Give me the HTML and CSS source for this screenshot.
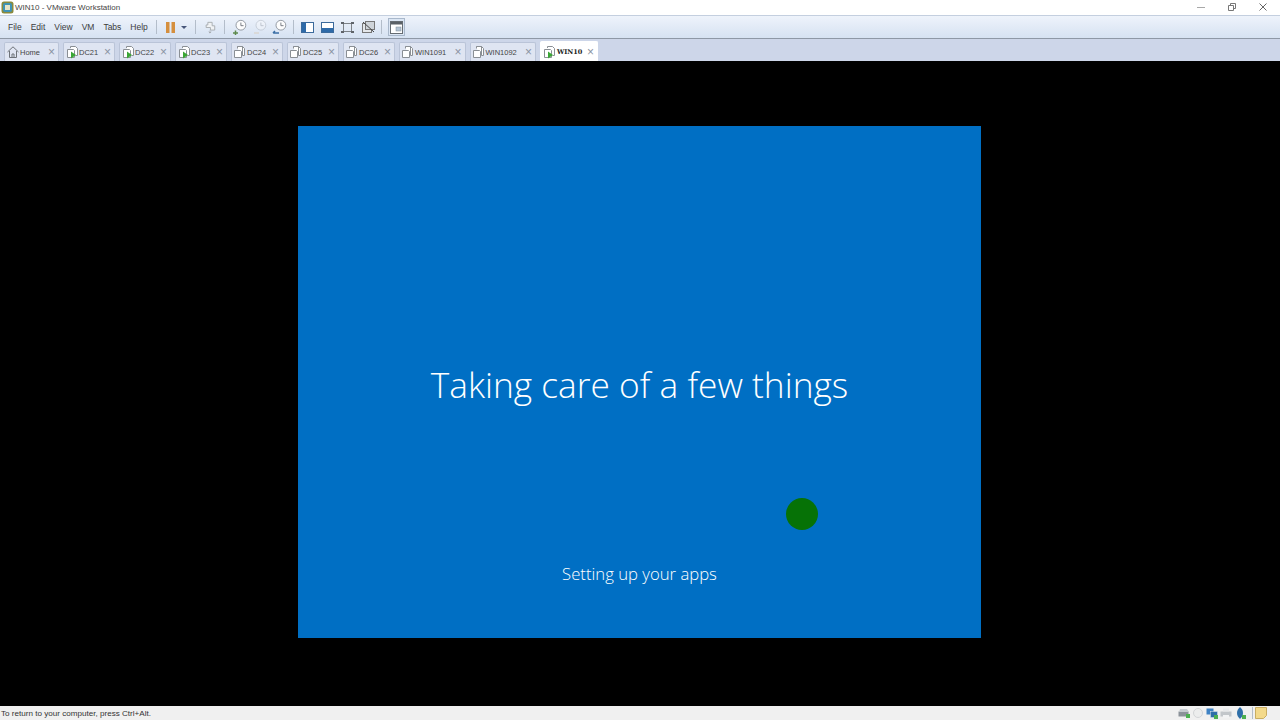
FILE: index.html
```html
<!DOCTYPE html>
<html lang="en">
<head>
  <meta charset="UTF-8" />
  <title>WIN10 - VMware Workstation</title>
  <link rel="stylesheet" href="styles.css">
</head>
<body>
  <svg class="defs" width="0" height="0">
    <symbol id="vm" viewBox="0 0 14 14">
      <path d="M4.500 3.500V1.500h5l2 2v7h-2M1.500 5.500h6l1 1v6h-7z" fill="#fff" stroke="#8a8f94"/>
      <path d="M4.500 1.500h5v9" fill="none" stroke="#8a8f94"/>
    </symbol>
    <symbol id="vm-on" viewBox="0 0 14 14">
      <path d="M5.500 3V1.500h5l2 2v7h-2M2.500 4.500h6l1 1v7h-7z" fill="#fff" stroke="#8a8f94"/>
      <path d="M6 6.500l5 3.500-5 3.500z" fill="#3aa635"/>
    </symbol>
    <symbol id="clock" viewBox="0 0 18 18">
      <circle cx="10" cy="7" r="5.500" fill="#fdfdfd" stroke="#8a9099"/>
      <path d="M10 4v3.500h3" fill="none" stroke="#6a7078"/>
    </symbol>
  </svg>

  <header class="titlebar">
    <div class="title">
      <svg class="app-icon" width="13" height="13" viewBox="0 0 13 13">
        <rect x="0.500" y="0.500" width="12" height="12" rx="2.500" fill="#8a8a3c"/>
        <rect x="2" y="2" width="9" height="9" rx="2" fill="#3f93b5"/>
        <rect x="4" y="4" width="5" height="5" fill="#e6e4c8"/>
      </svg>
      <span>WIN10 - VMware Workstation</span>
    </div>
    <div class="win-buttons">
      <svg width="8" height="8" viewBox="0 0 8 8"><path d="M0 4.500h8" stroke="#a8a8a8"/></svg>
      <svg width="8" height="8" viewBox="0 0 8 8"><path d="M0.500 2.500h5v5h-5zM2.500 2.500v-2h5v5h-2" fill="none" stroke="#777"/></svg>
      <svg width="8" height="8" viewBox="0 0 8 8"><path d="M0.500 0.500l7 7M7.500 0.500l-7 7" stroke="#666"/></svg>
    </div>
  </header>

  <nav class="toolbar">
    <ul class="menu">
      <li>File</li>
      <li>Edit</li>
      <li>View</li>
      <li>VM</li>
      <li>Tabs</li>
      <li>Help</li>
    </ul>
    <span class="sep sep-menu"></span>
    <svg class="pause" width="9" height="11" viewBox="0 0 9 11"><path d="M0 0h3.500v11H0zM5.500 0H9v11H5.500z" fill="#d58f3e"/></svg>
    <svg class="caret" width="6" height="3" viewBox="0 0 6 3"><path d="M0 0h6L3 3z" fill="#48567a"/></svg>
    <span class="sep sep-pause"></span>
    <svg class="tool-send" width="12" height="15" viewBox="0 0 14 15">
      <path d="M4.500 1.500h5v4h3v5h-5v-3h-5v-3h2z" fill="#f0f2f4" stroke="#a3a7ab"/>
      <path d="M7 11v3M5.500 12.500L7 14l1.500-1.500" fill="none" stroke="#a3a7ab"/>
    </svg>
    <span class="sep sep-send"></span>
    <svg class="tool-clock" width="16" height="16"><use href="#clock"/><path d="M1 14h5M3.500 11.500v5" stroke="#5d8a4c" stroke-width="1.500"/></svg>
    <svg class="tool-clock faded" width="16" height="16"><use href="#clock"/><path d="M2 14h5" stroke="#d9b88f" stroke-width="1.500"/></svg>
    <svg class="tool-clock" width="16" height="16"><use href="#clock"/><path d="M1 14h6M1 14l2-2" fill="none" stroke="#3a6ea5" stroke-width="1.500"/></svg>
    <span class="sep sep-clock"></span>
    <svg class="view-a" width="13" height="11" viewBox="0 0 13 11"><rect x="0.500" y="0.500" width="12" height="10" fill="#fff" stroke="#3b6a9c"/><rect x="1" y="1" width="4" height="9" fill="#2e6aa8"/></svg>
    <svg class="view-b" width="13" height="11" viewBox="0 0 13 11"><rect x="0.500" y="0.500" width="12" height="10" fill="#fff" stroke="#3b6a9c"/><rect x="1" y="6" width="11" height="4" fill="#2e6aa8"/></svg>
    <svg class="view-c" width="13" height="11" viewBox="0 0 13 11"><path d="M2.500 1.500h8v8h-8z" fill="none" stroke="#7d8287"/><path d="M0 0h3v2H0zM10 0h3v2h-3zM0 9h3v2H0zM10 9h3v2h-3z" fill="#5f646a"/></svg>
    <svg class="view-d" width="13" height="12" viewBox="0 0 13 12"><rect x="0.500" y="2.500" width="9" height="9" fill="#e4e7ea" stroke="#777"/><rect x="3.500" y="0.500" width="9" height="8" fill="#cfd4d9" stroke="#777"/><path d="M1 1l11 10" stroke="#444"/></svg>
    <span class="sep sep-view"></span>
    <div class="tool-active">
      <svg width="13" height="13" viewBox="0 0 13 13"><rect x="0.500" y="0.500" width="12" height="12" fill="#fff" stroke="#666c72"/><rect x="1" y="1" width="11" height="2.500" fill="#5a6066"/><rect x="6" y="6" width="5" height="4" fill="#b4c4d4" stroke="#7d8a96" stroke-width="0.500"/></svg>
    </div>
  </nav>

  <div class="tabstrip">
    <div class="tab tab-home">
      <svg width="12" height="12" viewBox="0 0 12 12"><path d="M0.500 6L6 0.800 11.500 6M2.500 5v6.500h7V5M5 11.500V8h2v3.500" fill="none" stroke="#6d7278"/></svg>
      <span class="tab-name">Home</span><span class="tab-x">×</span>
    </div>
    <div class="tab"><svg width="14" height="14"><use href="#vm-on"/></svg><span class="tab-name">DC21</span><span class="tab-x">×</span></div>
    <div class="tab"><svg width="14" height="14"><use href="#vm-on"/></svg><span class="tab-name">DC22</span><span class="tab-x">×</span></div>
    <div class="tab"><svg width="14" height="14"><use href="#vm-on"/></svg><span class="tab-name">DC23</span><span class="tab-x">×</span></div>
    <div class="tab"><svg width="14" height="14"><use href="#vm"/></svg><span class="tab-name">DC24</span><span class="tab-x">×</span></div>
    <div class="tab"><svg width="14" height="14"><use href="#vm"/></svg><span class="tab-name">DC25</span><span class="tab-x">×</span></div>
    <div class="tab"><svg width="14" height="14"><use href="#vm"/></svg><span class="tab-name">DC26</span><span class="tab-x">×</span></div>
    <div class="tab tab-wide"><svg width="14" height="14"><use href="#vm"/></svg><span class="tab-name">WIN1091</span><span class="tab-x">×</span></div>
    <div class="tab tab-wide"><svg width="14" height="14"><use href="#vm"/></svg><span class="tab-name">WIN1092</span><span class="tab-x">×</span></div>
    <div class="tab tab-active"><svg width="14" height="14"><use href="#vm-on"/></svg><span class="tab-name">WIN10</span><span class="tab-x">×</span></div>
  </div>

  <main class="stage">
    <section class="guest">
      <h1>Taking care of a few things</h1>
      <p>Setting up your apps</p>
      <div class="cursor-dot"></div>
    </section>
  </main>

  <footer class="statusbar">
    <span class="status-text">To return to your computer, press Ctrl+Alt.</span>
    <div class="status-icons">
      <svg width="12" height="10" viewBox="0 0 12 10"><rect x="0.500" y="3.500" width="10" height="5" fill="#8b9299"/><path d="M2 1h7l2 3H1z" fill="#c5cacf"/><rect x="8" y="6" width="4" height="4" fill="#4caf50"/></svg>
      <svg width="12" height="10" viewBox="0 0 12 10"><circle cx="6" cy="5" r="4.500" fill="#eceded" stroke="#d3d5d7"/></svg>
      <svg width="12" height="11" viewBox="0 0 12 11"><rect x="0.500" y="0.500" width="7" height="6" fill="#3f82c4"/><rect x="4.500" y="3.500" width="7" height="6" fill="#2f6fa8" stroke="#dfe6ec" stroke-width="0.500"/><rect x="8" y="7" width="4" height="4" fill="#4caf50"/></svg>
      <svg width="12" height="10" viewBox="0 0 12 10"><rect x="0.500" y="3.500" width="11" height="5" fill="#c2c6ca"/><rect x="3" y="0.500" width="6" height="3" fill="#e6e8ea"/><rect x="3" y="7" width="6" height="3" fill="#f2f3f4"/></svg>
      <svg width="12" height="12" viewBox="0 0 12 12"><path d="M6 0c2 2 3 3.500 3 6s-1 4-3 6c-2-2-3-3.500-3-6s1-4 3-6z" fill="#2f6fa8"/><rect x="8" y="8" width="4" height="4" fill="#4caf50"/></svg>
      <span class="sep sep-status"></span>
      <svg width="12" height="12" viewBox="0 0 12 12"><path d="M0.500 0.500h11v8l-3 3h-8z" fill="#f3d98a" stroke="#c9ad62"/></svg>
    </div>
  </footer>
</body>
</html>
```
FILE: styles.css
```css
* {
  box-sizing: border-box;
}

html, body {
  margin: 0;
  height: 720px;
  overflow: hidden;
}

body {
  display: flex;
  flex-direction: column;
  font-family: "Liberation Sans", Arial, sans-serif;
  font-size: 8.500px;
  color: #333;
  background: #fff;
}

.defs {
  display: none;
}

svg {
  flex: none;
  display: block;
}

/* title bar */
.titlebar {
  height: 15px;
  display: flex;
  justify-content: space-between;
  align-items: center;
  background: #fff;
}

.title {
  display: flex;
  align-items: center;
  gap: 1px;
  padding-left: 1px;
  font-size: 8px;
  color: #444;
}

.win-buttons {
  display: flex;
  gap: 23px;
  padding-right: 13px;
  margin-top: -1px;
}

/* toolbar */
.toolbar {
  height: 24px;
  display: flex;
  align-items: center;
  border-top: 1px solid #c4cfdf;
  border-bottom: 1px solid #8e98a6;
  background: linear-gradient(#eef3fb, #d6e2f2);
}

.menu {
  display: flex;
  list-style: none;
  margin: 0;
  padding: 0 0 0 8px;
  gap: 9px;
  width: 156px;
  color: #3c3c3c;
}

.sep {
  width: 1px;
  height: 14px;
  background: #b3bdca;
}

.pause { margin-left: 9px; }
.caret { margin-left: 6px; }
.sep-pause { margin-left: 8px; }
.tool-send { margin-left: 8px; }
.sep-send { margin-left: 8px; }
.tool-clock { margin-left: 4px; }
.toolbar .sep-send + .tool-clock { margin-left: 7px; }
.faded { opacity: 0.35; }
.sep-clock { margin-left: 5px; }
.view-a { margin-left: 7px; }
.view-b { margin-left: 7px; }
.view-c { margin-left: 7px; }
.view-d { margin-left: 8px; }
.sep-view { margin-left: 6px; }

.tool-active {
  margin-left: 6px;
  width: 17px;
  height: 18px;
  display: flex;
  align-items: center;
  justify-content: center;
  border: 1px solid #a9b8cb;
  background: #dbe6f4;
}

/* tabs */
.tabstrip {
  height: 22px;
  display: flex;
  align-items: flex-end;
  gap: 4px;
  padding-left: 4px;
  background: #cdd6e9;
}

.tab {
  width: 52px;
  height: 19px;
  display: flex;
  align-items: center;
  padding: 0 3px 0 1px;
  border: 1px solid #bac4d8;
  border-bottom: 0;
  border-radius: 2px 2px 0 0;
  background: #dfe5f2;
  font-size: 7.500px;
  color: #444;
}

.tab-home {
  width: 55px;
}

.tab-home svg {
  margin: 0 1px;
}

.tab-name {
  flex: 1;
}

.tab-x {
  width: 7px;
  text-align: center;
  font-size: 12px;
  line-height: 12px;
  color: #8b93a3;
}

.tab-wide {
  width: 66.500px;
}

.tab-active {
  width: 58px;
  height: 20px;
  border-color: #fff;
  background: #fff;
}

.tab-active .tab-name {
  flex: none;
  width: 30px;
  margin-left: 1px;
  font-family: "DejaVu Serif", serif;
  font-size: 6.500px;
  font-weight: bold;
  color: #222;
}

/* guest screen */
.stage {
  flex: 1;
  padding: 65px 299px 0 298px;
  background: #000;
}

.guest {
  position: relative;
  height: 512px;
  padding-top: 236px;
  text-align: center;
  color: #fff;
  background: #006fc4;
}

.guest h1 {
  margin: 0;
  height: 44px;
  font-family: "Open Sans", sans-serif;
  font-size: 35.300px;
  line-height: 44px;
  font-weight: 300;
  white-space: nowrap;
}

.guest p {
  margin: 156px 0 0;
  font-family: "Open Sans", sans-serif;
  font-size: 16.700px;
  line-height: 24px;
  font-weight: 300;
}

.cursor-dot {
  position: absolute;
  left: 488px;
  top: 372px;
  width: 32px;
  height: 32px;
  border-radius: 50%;
  background: #067206;
}

/* status bar */
.statusbar {
  height: 14px;
  display: flex;
  justify-content: space-between;
  align-items: center;
  padding: 0 13px 0 1px;
  background: #f0f0f0;
  font-size: 8.100px;
  color: #333;
}

.status-icons {
  display: flex;
  align-items: center;
  gap: 1px;
}

.status-icons svg {
  margin-left: 1px;
}

.sep-status {
  height: 12px;
  margin-left: 5px;
}
```
